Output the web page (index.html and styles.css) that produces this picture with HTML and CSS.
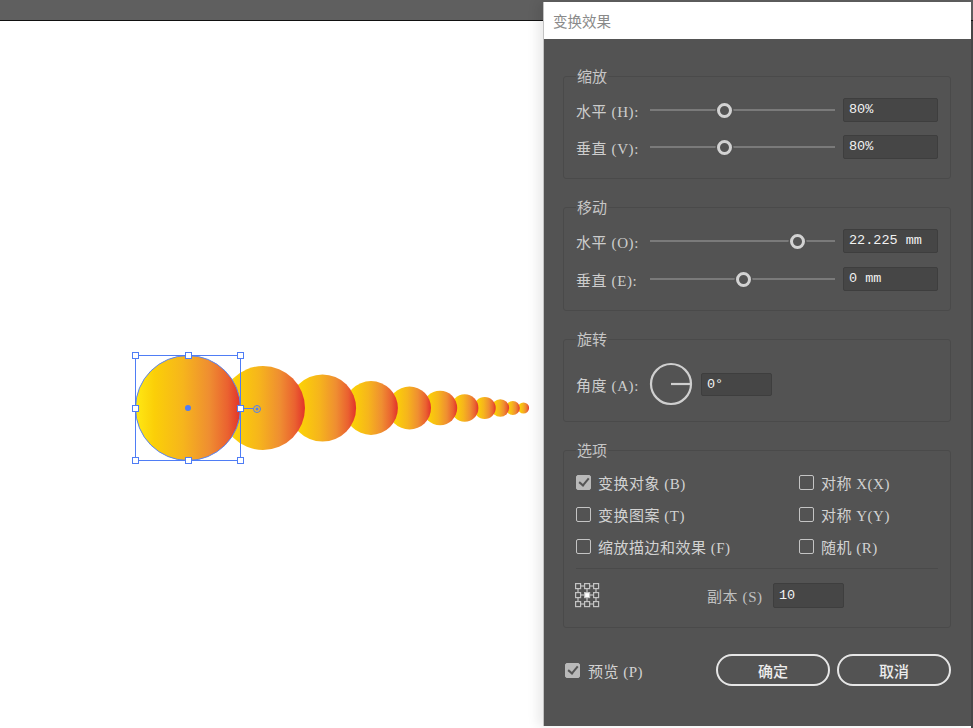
FILE: index.html
```html
<!DOCTYPE html>
<html lang="zh-CN">
<head>
<meta charset="utf-8">
<title>变换效果</title>
<link rel="stylesheet" href="styles.css">
</head>
<body>
<div class="app">
  <div class="topbar"></div>
  <div class="main">
    <div class="canvas">
      <svg class="art" width="543" height="707" viewBox="0 21 543 707">
        <defs>
          <linearGradient id="g" x1="0" y1="0" x2="1" y2="0">
            <stop offset="0" stop-color="#ffe914"/>
            <stop offset="0.18" stop-color="#fbcf08"/>
            <stop offset="0.45" stop-color="#f6b51c"/>
            <stop offset="0.7" stop-color="#ef8e31"/>
            <stop offset="0.88" stop-color="#ea6130"/>
            <stop offset="1" stop-color="#e2322a"/>
          </linearGradient>
        </defs>
        <circle cx="523.5" cy="408" r="5.6" fill="url(#g)"/>
        <circle cx="512.8" cy="408" r="7" fill="url(#g)"/>
        <circle cx="500.3" cy="408" r="8.8" fill="url(#g)"/>
        <circle cx="484.7" cy="408" r="11" fill="url(#g)"/>
        <circle cx="464.7" cy="408" r="13.7" fill="url(#g)"/>
        <circle cx="440" cy="408" r="17.2" fill="url(#g)"/>
        <circle cx="409.5" cy="408" r="21.5" fill="url(#g)"/>
        <circle cx="371" cy="408" r="26.9" fill="url(#g)"/>
        <circle cx="322.5" cy="408" r="33.6" fill="url(#g)"/>
        <circle cx="263" cy="408" r="42" fill="url(#g)"/>
        <circle cx="188" cy="408" r="52.5" fill="url(#g)" stroke="#5a84f0" stroke-width="1"/>
        <g fill="none" stroke="#4f7df5" stroke-width="1">
          <rect x="135.5" y="355.5" width="105" height="105"/>
          <line x1="240" y1="408.5" x2="253" y2="408.5"/>
          <circle cx="257" cy="409" r="3.5"/>
        </g>
        <circle cx="257" cy="409" r="1.5" fill="#4f7df5"/>
        <circle cx="188" cy="408" r="3" fill="#4f7df5"/>
        <g fill="#fff" stroke="#4f7df5" stroke-width="1">
          <rect x="132.5" y="352.5" width="6" height="6"/>
          <rect x="185.5" y="352.5" width="6" height="6"/>
          <rect x="237.5" y="352.5" width="6" height="6"/>
          <rect x="132.5" y="405.5" width="6" height="6"/>
          <rect x="237.5" y="405.5" width="6" height="6"/>
          <rect x="132.5" y="457.5" width="6" height="6"/>
          <rect x="185.5" y="457.5" width="6" height="6"/>
          <rect x="237.5" y="457.5" width="6" height="6"/>
        </g>
      </svg>
    </div>
    <div class="strip"></div>
  </div>

  <div class="dialog">
    <div class="titlebar">变换效果</div>
    <div class="dbody">

      <fieldset class="group">
        <legend>缩放</legend>
        <div class="rows">
          <div class="srow">
            <span class="lbl">水平 (H):</span>
            <div class="slider"><span class="thumb" style="left:40.5%"></span></div>
            <div class="field">80%</div>
          </div>
          <div class="srow">
            <span class="lbl">垂直 (V):</span>
            <div class="slider"><span class="thumb" style="left:40.5%"></span></div>
            <div class="field">80%</div>
          </div>
        </div>
      </fieldset>

      <fieldset class="group">
        <legend>移动</legend>
        <div class="rows rows-move">
          <div class="srow">
            <span class="lbl">水平 (O):</span>
            <div class="slider"><span class="thumb" style="left:79.5%"></span></div>
            <div class="field">22.225 mm</div>
          </div>
          <div class="srow">
            <span class="lbl">垂直 (E):</span>
            <div class="slider"><span class="thumb" style="left:50.3%"></span></div>
            <div class="field">0 mm</div>
          </div>
        </div>
      </fieldset>

      <fieldset class="group group-rotate">
        <legend>旋转</legend>
        <div class="arow">
          <span class="lbl">角度 (A):</span>
          <svg class="dial" width="44" height="44" viewBox="0 0 44 44">
            <circle cx="22" cy="22" r="20" fill="none" stroke="#cfcfcf" stroke-width="2.2"/>
            <line x1="22" y1="22" x2="42" y2="22" stroke="#cfcfcf" stroke-width="2.2"/>
          </svg>
          <div class="field field-small">0°</div>
        </div>
      </fieldset>

      <fieldset class="group">
        <legend>选项</legend>
        <div class="checks">
          <label class="chk"><span class="box on"></span>变换对象 (B)</label>
          <label class="chk"><span class="box"></span>对称 X(X)</label>
          <label class="chk"><span class="box"></span>变换图案 (T)</label>
          <label class="chk"><span class="box"></span>对称 Y(Y)</label>
          <label class="chk"><span class="box"></span>缩放描边和效果 (F)</label>
          <label class="chk"><span class="box"></span>随机 (R)</label>
        </div>
        <div class="sep"></div>
        <div class="copies">
          <svg class="refpt" width="26" height="26" viewBox="0 0 26 26">
            <g stroke="#c4c4c4" stroke-width="1.2">
              <line x1="6" y1="3" x2="9" y2="3"/><line x1="15" y1="3" x2="18" y2="3"/>
              <line x1="6" y1="12" x2="9" y2="12"/><line x1="15" y1="12" x2="18" y2="12"/>
              <line x1="6" y1="21" x2="9" y2="21"/><line x1="15" y1="21" x2="18" y2="21"/>
              <line x1="3" y1="6" x2="3" y2="9"/><line x1="3" y1="15" x2="3" y2="18"/>
              <line x1="12" y1="6" x2="12" y2="9"/><line x1="12" y1="15" x2="12" y2="18"/>
              <line x1="21" y1="6" x2="21" y2="9"/><line x1="21" y1="15" x2="21" y2="18"/>
            </g>
            <g fill="#535353" stroke="#c4c4c4" stroke-width="1.2">
              <rect x="0.6" y="0.6" width="5" height="5"/><rect x="9.6" y="0.6" width="5" height="5"/><rect x="18.6" y="0.6" width="5" height="5"/>
              <rect x="0.6" y="9.6" width="5" height="5"/><rect x="18.6" y="9.6" width="5" height="5"/>
              <rect x="0.6" y="18.6" width="5" height="5"/><rect x="9.6" y="18.6" width="5" height="5"/><rect x="18.6" y="18.6" width="5" height="5"/>
            </g>
            <rect x="9.6" y="9.6" width="5" height="5" fill="#ffffff" stroke="#c4c4c4" stroke-width="1.2"/>
          </svg>
          <span class="lbl copies-lbl">副本 (S)</span>
          <div class="field field-small field-tall">10</div>
        </div>
      </fieldset>

      <div class="footer">
        <label class="chk preview"><span class="box on"></span>预览 (P)</label>
        <div class="buttons">
          <button class="btn">确定</button>
          <button class="btn">取消</button>
        </div>
      </div>

    </div>
  </div>
</div>
</body>
</html>
```

FILE: styles.css
```css
* { box-sizing: border-box; }

html, body {
  margin: 0;
  padding: 0;
  width: 973px;
  height: 728px;
  overflow: hidden;
  background: #ffffff;
  font-family: "Liberation Serif", "Noto Sans CJK SC", serif;
}

.app {
  position: relative;
  width: 973px;
  height: 728px;
  display: flex;
  flex-direction: column;
}

.topbar {
  height: 21px;
  background: #5f5f5f;
  border-bottom: 1px solid #111111;
  flex: none;
}

.main {
  flex: 1;
  display: flex;
}

.canvas {
  flex: 1;
  background: #ffffff;
  position: relative;
}

.art {
  display: block;
}

.strip {
  width: 2px;
  background: #474747;
}

/* Dialog window */
.dialog {
  position: absolute;
  left: 543px;
  top: 2px;
  width: 428px;
  height: 724px;
  border-left: 1px solid #c2c2c2;
  background: #535353;
  box-shadow: -6px 0 10px rgba(0, 0, 0, 0.08);
  display: flex;
  flex-direction: column;
}

.titlebar {
  height: 37px;
  background: #ffffff;
  color: #8a8a8a;
  font-family: "Noto Sans CJK SC", sans-serif;
  font-size: 14.5px;
  line-height: 37px;
  padding-left: 9px;
  flex: none;
}

.dbody {
  padding: 27px 20px 0 19px;
  display: flex;
  flex-direction: column;
  gap: 18px;
}

.group {
  margin: 0;
  padding: 0 12px 19px 12px;
  border: 1px solid #4a4a4a;
  border-radius: 3px;
  min-width: 0;
}

.group-rotate {
  padding-bottom: 15px;
}

.group legend {
  padding: 0 1px;
  margin-left: 0;
  font-family: "Noto Sans CJK SC", sans-serif;
  font-size: 15px;
  line-height: 20px;
  height: 20px;
  color: #c6c6c6;
}

.rows {
  padding-top: 12px;
  display: flex;
  flex-direction: column;
  gap: 13px;
}

.rows-move {
  gap: 14px;
}

.srow {
  display: grid;
  grid-template-columns: 74px 193px 95px;
  column-gap: 0;
  align-items: center;
  height: 24px;
}

.lbl {
  font-size: 15px;
  color: #cdcdcd;
  letter-spacing: 0.6px;
  white-space: nowrap;
}

.slider {
  position: relative;
  height: 2px;
  background: #7a7a7a;
  margin-right: 8px;
  width: 185px;
}

.srow .field {
  grid-column: 3;
}

.thumb {
  position: absolute;
  top: 50%;
  width: 15px;
  height: 15px;
  margin-left: -7.5px;
  margin-top: -7.5px;
  border-radius: 50%;
  border: 3px solid #d2d2d2;
  background: #535353;
  box-shadow: 0 0 0 1.5px #535353;
}

.field {
  height: 24px;
  width: 95px;
  background: #464646;
  border: 1px solid #3e3e3e;
  border-radius: 2px;
  color: #f2f2f2;
  font-family: "Liberation Mono", "DejaVu Sans Mono", monospace;
  font-size: 13.5px;
  line-height: 22px;
  padding-left: 5px;
  white-space: nowrap;
}

.field-small {
  width: 71px;
  height: 23px;
  line-height: 21px;
}

.field-tall {
  height: 25px;
  line-height: 23px;
}

.arow {
  display: flex;
  align-items: center;
  padding-top: 13px;
  height: 57px;
}

.arow .lbl {
  width: 73px;
}

.dial {
  display: block;
  margin-right: 8px;
}

.checks {
  padding-top: 12px;
  display: grid;
  grid-template-columns: 223px 1fr;
  row-gap: 12px;
}

.chk {
  display: flex;
  align-items: center;
  height: 20px;
  font-size: 15px;
  color: #d2d2d2;
  letter-spacing: 0.5px;
  white-space: nowrap;
}

.box {
  width: 15px;
  height: 15px;
  border: 1.5px solid #c4c4c4;
  border-radius: 2px;
  margin-right: 7px;
  flex: none;
  position: relative;
}

.box.on {
  background: #b9b9b9;
  border-color: #b9b9b9;
}

.box.on::after {
  content: "";
  position: absolute;
  left: 3.5px;
  top: 0.5px;
  width: 4px;
  height: 8px;
  border-right: 2px solid #555555;
  border-bottom: 2px solid #555555;
  transform: rotate(40deg);
}

.sep {
  height: 1px;
  background: #4a4a4a;
  margin-top: 12px;
}

.copies {
  display: flex;
  align-items: center;
  margin-top: 14px;
  height: 25px;
}

.refpt {
  display: block;
  margin-left: -1px;
}

.copies-lbl {
  margin-left: 106px;
  width: 66px;
  color: #c0c0c0;
}

.footer {
  margin-top: 8px;
  display: flex;
  align-items: center;
  justify-content: space-between;
  height: 32px;
}

.preview {
  margin-left: 2px;
}

.preview .box {
  margin-right: 8px;
}

.buttons {
  display: flex;
  gap: 7px;
}

.btn {
  width: 114px;
  height: 32px;
  border: 2px solid #e6e6e6;
  border-radius: 16px;
  background: transparent;
  color: #ececec;
  font-family: "Noto Sans CJK SC", sans-serif;
  font-size: 15px;
  font-weight: 500;
  padding: 0;
}
```
